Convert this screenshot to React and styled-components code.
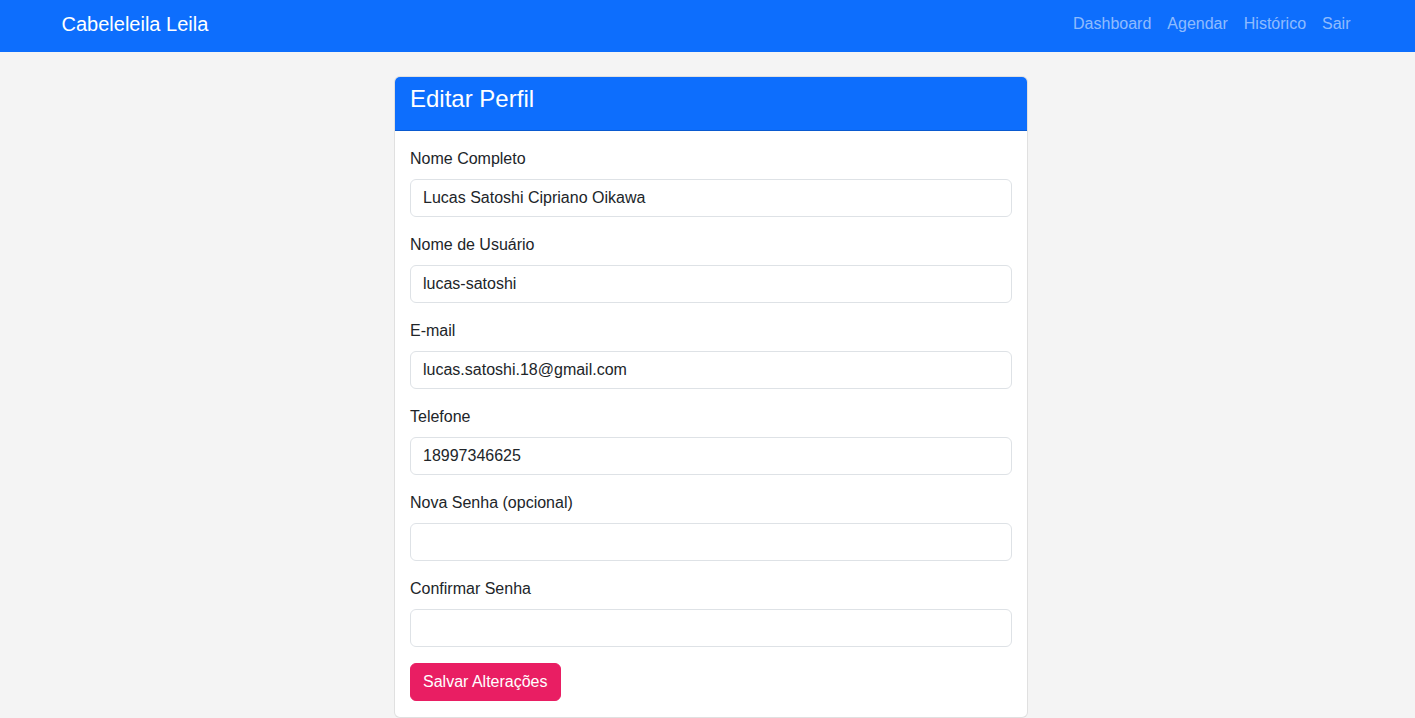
import React from "react";
import styled, { createGlobalStyle } from "styled-components";

const GlobalStyle = createGlobalStyle`
  * { box-sizing: border-box; }
  body {
    margin: 0;
    background: #f4f4f4;
    font-family: "Liberation Sans", Arial, sans-serif;
    font-size: 16px;
    line-height: 1.5;
    color: #212529;
  }
`;

const Navbar = styled.nav`
  background: #0d6efd;
  height: 52px;
  padding-bottom: 4px;
  display: flex;
  align-items: center;
`;

const NavContainer = styled.div`
  width: 1320px;
  margin: 0 auto;
  padding: 0 12px;
  display: flex;
  align-items: center;
  justify-content: space-between;
`;

const Brand = styled.a`
  color: #fff;
  font-size: 20px;
  line-height: 30px;
  text-decoration: none;
  margin-left: 2px;
`;

const NavLinks = styled.ul`
  display: flex;
  list-style: none;
  margin: 0 -3px 0 0;
  padding: 0;
`;

const NavLink = styled.a`
  display: block;
  padding: 8px 8px;
  color: rgba(255, 255, 255, 0.55);
  text-decoration: none;
`;

const Main = styled.div`
  display: flex;
  justify-content: center;
  padding: 24px 0 0 7px;
`;

const Card = styled.div`
  width: 634px;
  background: #fff;
  border: 1px solid rgba(0, 0, 0, 0.12);
  border-radius: 6px;
  overflow: hidden;
`;

const CardHeader = styled.div`
  background: #0d6efd;
  color: #fff;
  padding: 8px 15px 8px;
  border-bottom: 1px solid rgba(0, 0, 0, 0.175);
`;

const Title = styled.h4`
  margin: 0 0 8px;
  font-size: 24px;
  font-weight: 500;
  line-height: 1.2;
`;

const CardBody = styled.form`
  padding: 16px 15px;
`;

const Field = styled.div`
  margin-bottom: 16px;
`;

const Label = styled.label`
  display: block;
  margin-bottom: 8px;
`;

const Input = styled.input`
  display: block;
  width: 100%;
  height: 38px;
  padding: 6px 12px;
  font: inherit;
  color: #212529;
  background: #fff;
  border: 1px solid #dee2e6;
  border-radius: 6px;
  outline: none;
`;

const Button = styled.button`
  font: inherit;
  color: #fff;
  background: #e91e63;
  border: 1px solid #e91e63;
  border-radius: 6px;
  padding: 6px 12px;
  height: 38px;
  cursor: pointer;
`;

const fields = [
  { label: "Nome Completo", value: "Lucas Satoshi Cipriano Oikawa", type: "text" },
  { label: "Nome de Usuário", value: "lucas-satoshi", type: "text" },
  { label: "E-mail", value: "lucas.satoshi.18@gmail.com", type: "email" },
  { label: "Telefone", value: "18997346625", type: "text" },
  { label: "Nova Senha (opcional)", value: "", type: "password" },
  { label: "Confirmar Senha", value: "", type: "password" },
];

export default function App() {
  return (
    <>
      <GlobalStyle />
      <Navbar>
        <NavContainer>
          <Brand href="#">Cabeleleila Leila</Brand>
          <NavLinks>
            {["Dashboard", "Agendar", "Histórico", "Sair"].map((l) => (
              <li key={l}>
                <NavLink href="#">{l}</NavLink>
              </li>
            ))}
          </NavLinks>
        </NavContainer>
      </Navbar>
      <Main>
        <Card>
          <CardHeader>
            <Title>Editar Perfil</Title>
          </CardHeader>
          <CardBody onSubmit={(e) => e.preventDefault()}>
            {fields.map((f) => (
              <Field key={f.label}>
                <Label>{f.label}</Label>
                <Input type={f.type} defaultValue={f.value} />
              </Field>
            ))}
            <Button type="submit">Salvar Alterações</Button>
          </CardBody>
        </Card>
      </Main>
    </>
  );
}
